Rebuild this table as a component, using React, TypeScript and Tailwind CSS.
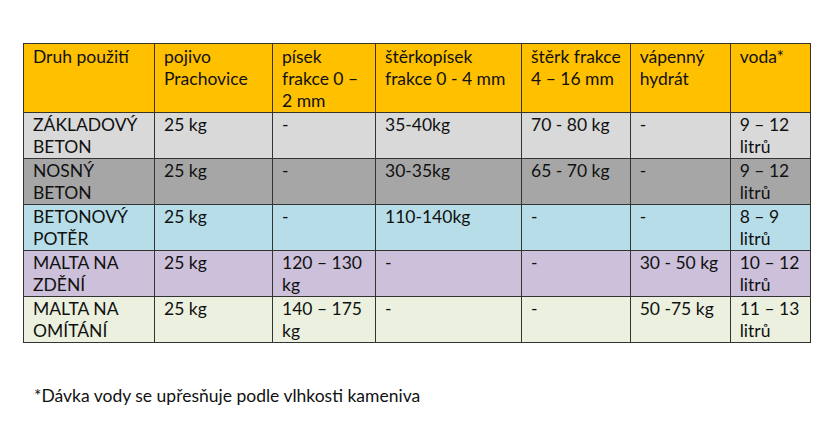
const header = [
  "Druh použití",
  "pojivo|Prachovice",
  "písek|frakce 0 –|2 mm",
  "štěrkopísek|frakce 0 - 4 mm",
  "štěrk frakce|4 – 16 mm",
  "vápenný|hydrát",
  "voda*",
];

const widths = ["w-[131px]", "w-[118px]", "w-[103px]", "w-[146px]", "w-[107px]", "w-[100px]", "w-[80px]"];

const rows: { bg: string; cells: string[] }[] = [
  { bg: "bg-[#d9d9d9]", cells: ["ZÁKLADOVÝ|BETON", "25 kg", "-", "35-40kg", "70 - 80 kg", "-", "9 – 12|litrů"] },
  { bg: "bg-[#a6a6a6]", cells: ["NOSNÝ|BETON", "25 kg", "-", "30-35kg", "65 - 70 kg", "-", "9 – 12|litrů"] },
  { bg: "bg-[#b7dee8]", cells: ["BETONOVÝ|POTĚR", "25 kg", "-", "110-140kg", "-", "-", "8 – 9|litrů"] },
  { bg: "bg-[#ccc0da]", cells: ["MALTA NA|ZDĚNÍ", "25 kg", "120 – 130|kg", "-", "-", "30 - 50 kg", "10 – 12|litrů"] },
  { bg: "bg-[#ebf1de]", cells: ["MALTA NA|OMÍTÁNÍ", "25 kg", "140 – 175|kg", "-", "-", "50 -75 kg", "11 – 13|litrů"] },
];

function Lines({ text }: { text: string }) {
  return (
    <>
      {text.split("|").map((l, i) => (
        <span key={i} className="block whitespace-nowrap">
          {l}
        </span>
      ))}
    </>
  );
}

export default function App() {
  return (
    <div
      className="w-[830px] h-[441px] bg-white text-[#111] overflow-hidden"
      style={{ fontFamily: "Lato, 'Open Sans', sans-serif" }}
    >
      <div className="pt-[43px] pl-[23px]">
        <table className="table-fixed border-collapse text-[17.5px] leading-[22px]">
          <colgroup>
            {widths.map((w, i) => (
              <col key={i} className={w} />
            ))}
          </colgroup>
          <thead>
            <tr className="bg-[#ffc000] h-[68px]">
              {header.map((h, i) => (
                <th key={i} className="border border-[#3a3428] align-top text-left font-normal px-[9px] pt-[2px]">
                  <Lines text={h} />
                </th>
              ))}
            </tr>
          </thead>
          <tbody>
            {rows.map((r, ri) => (
              <tr key={ri} className={`${r.bg} h-[46px]`}>
                {r.cells.map((c, ci) => (
                  <td key={ci} className="border border-[#333] align-top px-[9px] pt-[1px]">
                    <Lines text={c} />
                  </td>
                ))}
              </tr>
            ))}
          </tbody>
        </table>
        <p className="mt-[42px] pl-[11px] text-[17.5px] leading-[22px]">
          *Dávka vody se upřesňuje podle vlhkosti kameniva
        </p>
      </div>
    </div>
  );
}
